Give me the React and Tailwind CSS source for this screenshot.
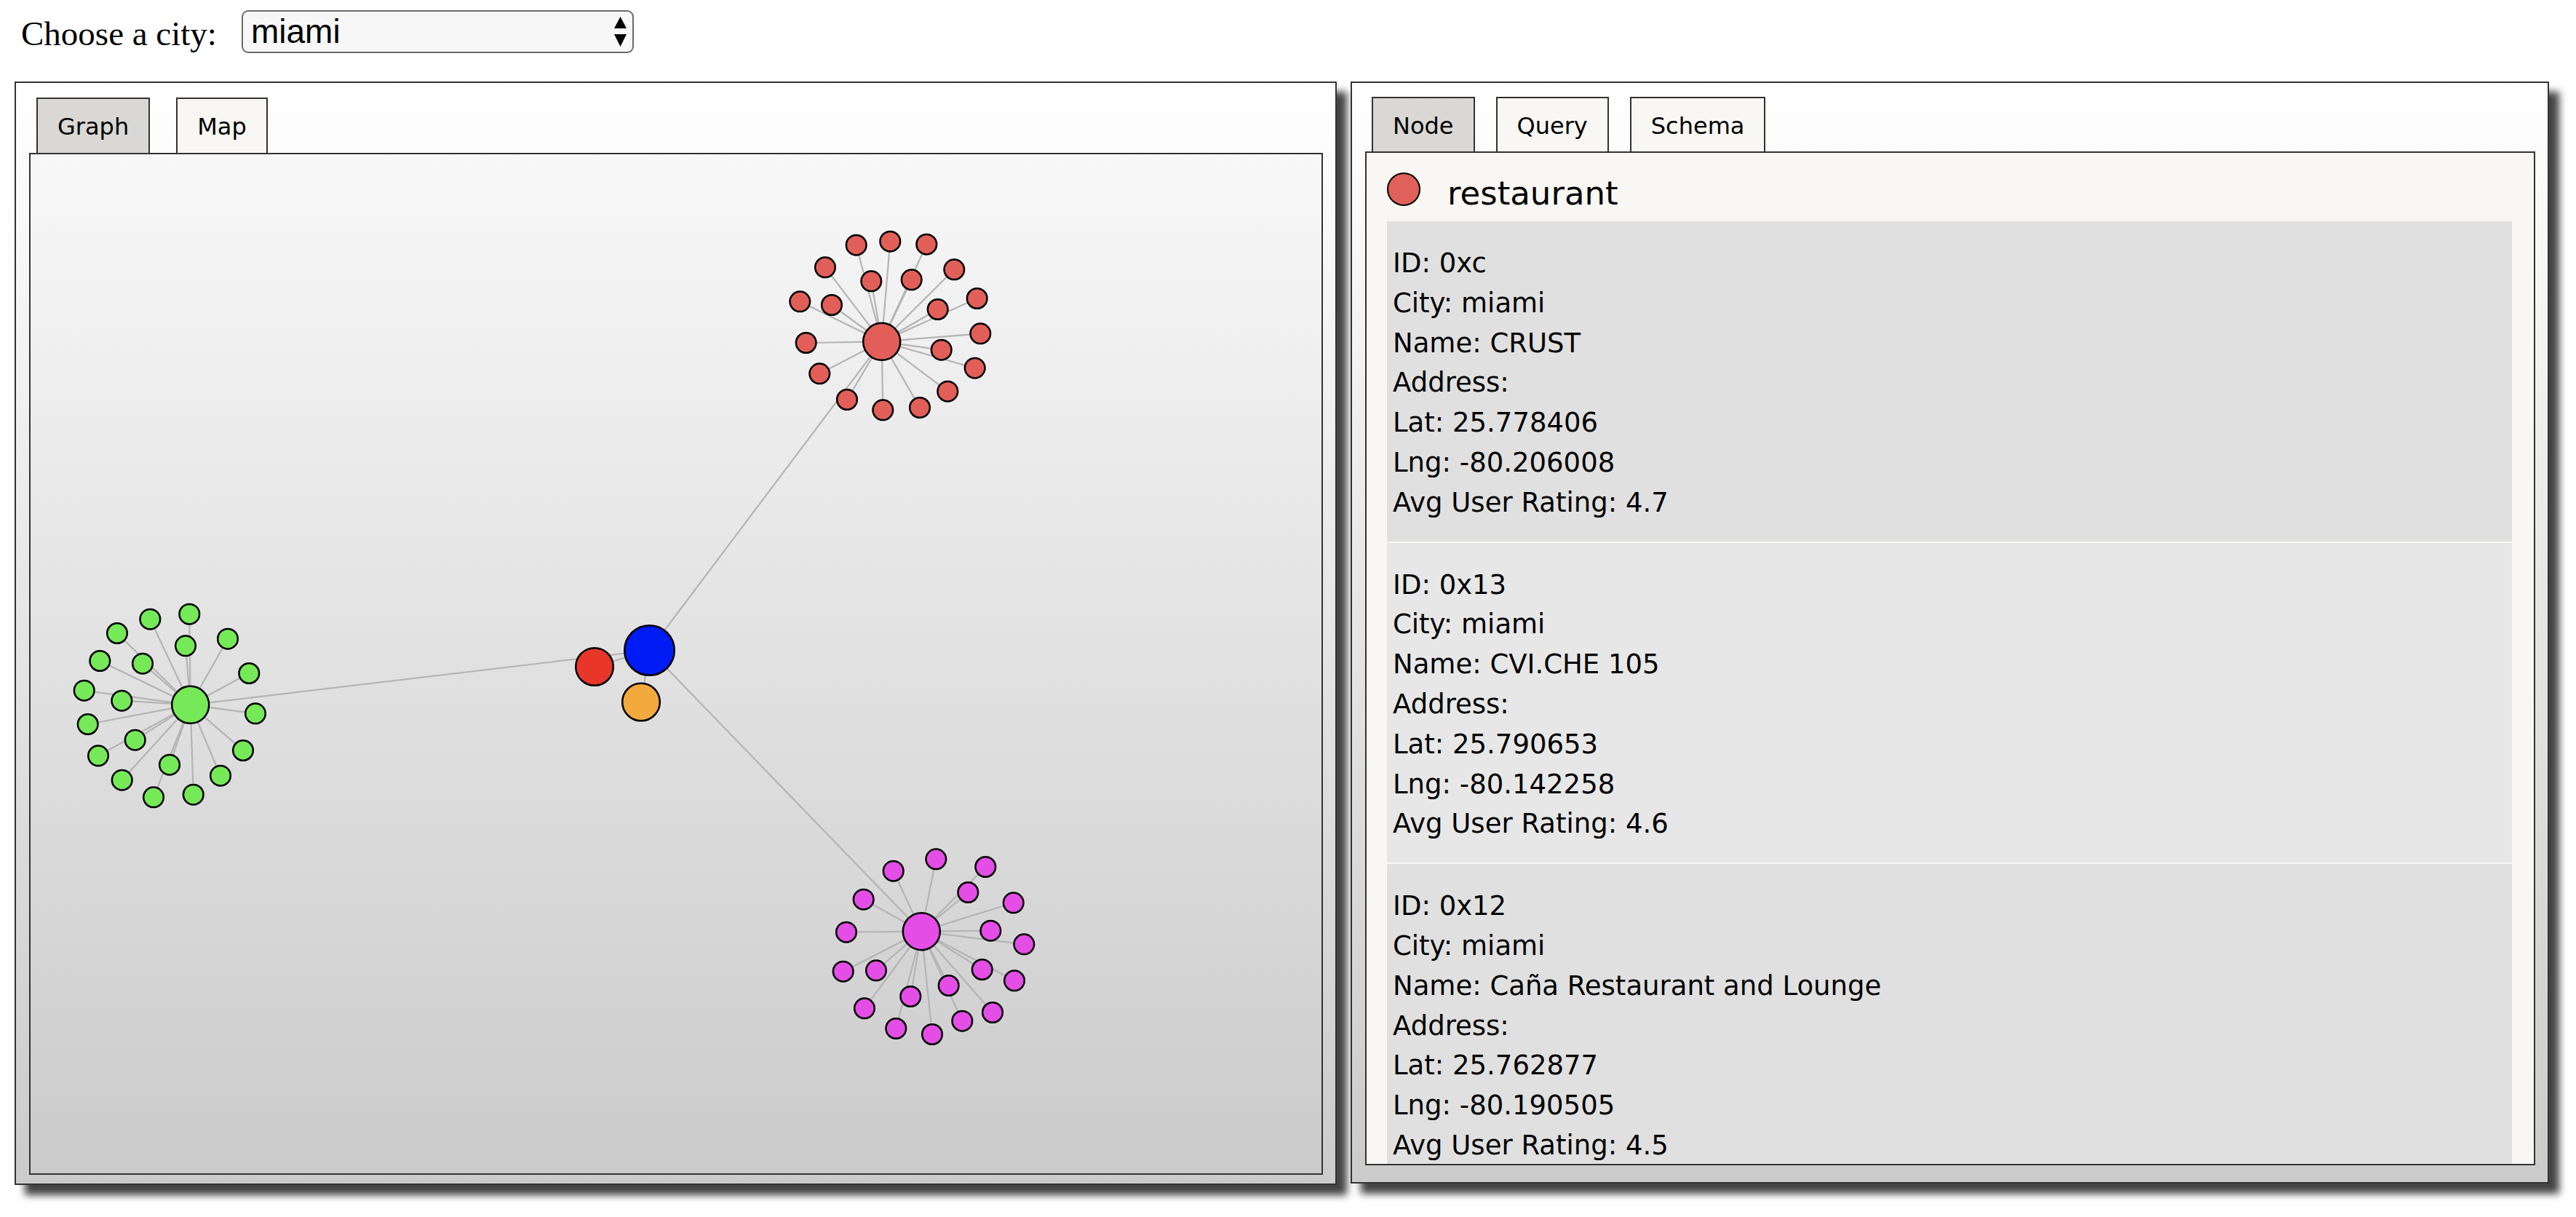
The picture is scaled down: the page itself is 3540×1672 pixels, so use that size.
import React from 'react';

const EDGE = '#b4b4b4';
const BLUE = [892.5, 893.5];

// hub nodes with their leaf nodes, page coordinates
const clusters = [
    {
        color: '#e15f58',
        hub: [1211.7, 469.3],
        leaves: [
            [1176.7, 336.7], [1223.3, 331.7], [1273.3, 335.7], [1134, 367.3], [1197.3, 386.3],
            [1252.7, 384.3], [1311.3, 370.3], [1099.3, 414.3], [1143, 419], [1288.7, 425],
            [1342.7, 410], [1107.7, 471], [1347.3, 458.3], [1293.7, 480.7], [1126.3, 513.3],
            [1339.7, 505.7], [1302.3, 537.7], [1164, 549], [1213.3, 563.3], [1264, 560],
        ],
    },
    {
        color: '#75e957',
        hub: [261.7, 968.3],
        leaves: [
            [260.3, 843.7], [206.3, 850.7], [161, 870], [255, 887.3], [313, 877.7],
            [137.3, 908], [196, 911.7], [342.3, 925], [115.7, 948.7], [167.3, 962.7],
            [351, 980.3], [120.7, 995], [185.7, 1016.7], [135, 1038.3], [334, 1031],
            [233, 1050.7], [303, 1065.7], [167.7, 1071.7], [211, 1095.3], [265.7, 1091.7],
        ],
    },
    {
        color: '#e44de6',
        hub: [1266.3, 1279.7],
        leaves: [
            [1286.3, 1180.3], [1227.7, 1196.7], [1354.3, 1191], [1330.3, 1226], [1186.7, 1235.7],
            [1392.7, 1240.3], [1163, 1280.7], [1361.3, 1278.7], [1407.3, 1297.3], [1158.7, 1334.7],
            [1204, 1333.3], [1349.7, 1332], [1394, 1347.3], [1303.7, 1354], [1251.3, 1369],
            [1188, 1385.3], [1364, 1391], [1322.3, 1402.7], [1231.3, 1413], [1281, 1421],
        ],
    },
];

const smallNodes = [
    {color: '#e8372a', at: [817, 916]},
    {color: '#f2aa3e', at: [881, 964.5]},
];

const restaurants = [
    {id: '0xc', name: 'CRUST', lat: '25.778406', lng: '-80.206008', rating: '4.7'},
    {id: '0x13', name: 'CVI.CHE 105', lat: '25.790653', lng: '-80.142258', rating: '4.6'},
    {id: '0x12', name: 'Caña Restaurant and Lounge', lat: '25.762877', lng: '-80.190505', rating: '4.5'},
];

function Tab({label, active}) {
    return (
        <div
            className={`h-full flex items-center pt-[2px] px-[27px] border-2 border-b-0 border-[#333] text-[32px] text-black ${active ? 'bg-[#d9d8d4]' : 'bg-[#f8f7f3]'}`}>
            {label}
        </div>
    );
}

function Graph() {
    return (
        <svg width="1774" height="1400" viewBox="42 212 1774 1400" className="block">
            {clusters.map((c, i) => (
                <g key={'e' + i}>
                    <line x1={c.hub[0]} y1={c.hub[1]} x2={BLUE[0]} y2={BLUE[1]} stroke={EDGE} strokeWidth="2.2"/>
                    {c.leaves.map((l, j) => (
                        <line key={j} x1={c.hub[0]} y1={c.hub[1]} x2={l[0]} y2={l[1]} stroke={EDGE}
                              strokeWidth="2.2"/>
                    ))}
                </g>
            ))}
            {smallNodes.map((n, i) => (
                <line key={'s' + i} x1={n.at[0]} y1={n.at[1]} x2={BLUE[0]} y2={BLUE[1]} stroke={EDGE}
                      strokeWidth="2.2"/>
            ))}

            {clusters.map((c, i) => (
                <g key={'n' + i}>
                    {c.leaves.map((l, j) => (
                        <circle key={j} cx={l[0]} cy={l[1]} r="13.8" fill={c.color} stroke="#000" strokeWidth="2.5"/>
                    ))}
                    <circle cx={c.hub[0]} cy={c.hub[1]} r="25.5" fill={c.color} stroke="#000" strokeWidth="2.5"/>
                </g>
            ))}
            {smallNodes.map((n, i) => (
                <circle key={'c' + i} cx={n.at[0]} cy={n.at[1]} r="25.8" fill={n.color} stroke="#000"
                        strokeWidth="2.5"/>
            ))}
            <circle cx={BLUE[0]} cy={BLUE[1]} r="34.3" fill="#001cf5" stroke="#000" strokeWidth="2.5"/>
        </svg>
    );
}

export default function App() {
    return (
        <div className="w-[3540px] h-[1672px] bg-white pt-[14px] pl-[20px] overflow-hidden">

            {/* city chooser */}
            <div className="flex items-center h-[59px] pl-[9px]">
                <div className="w-[303px] mt-[6px] text-[47px] text-black font-['Liberation_Serif',serif] whitespace-nowrap">
                    Choose a city:
                </div>
                <div
                    className="w-[539px] h-[59px] flex items-center justify-between pl-[11px] pr-[8px] rounded-[9px] border-2 border-[#6b6b6b] bg-[#f7f7f7]">
                    <span className="text-[46px] text-black font-['Liberation_Sans',Arial,sans-serif]">miami</span>
                    <svg width="17" height="42" viewBox="0 0 17 42">
                        <polygon points="0,16 8.5,0 17,16" fill="#000"/>
                        <polygon points="0,24 17,24 8.5,41" fill="#000"/>
                    </svg>
                </div>
            </div>

            <div className="flex mt-[39px] gap-[19px] font-['DejaVu_Sans',Verdana,sans-serif]">

                {/* left panel: graph */}
                <div
                    className="w-[1817px] h-[1516px] border-2 border-[#333] bg-linear-to-b from-[#ffffff] to-[#cbcbcb] pt-[20px] pl-[18px] pr-[17px] pb-[12px] shadow-[14px_14px_10px_#444] flex flex-col">
                    <div className="h-[76px] flex pl-[10px] gap-[36px]">
                        <Tab label="Graph" active/>
                        <Tab label="Map"/>
                    </div>
                    <div
                        className="w-[1778px] h-[1404px] border-2 border-[#333] bg-linear-to-b from-[#f8f8f8] to-[#cbcbcb] overflow-hidden">
                        <Graph/>
                    </div>
                </div>

                {/* right panel: node details */}
                <div
                    className="w-[1647px] h-[1514px] border-2 border-[#333] bg-linear-to-b from-[#ffffff] to-[#cbcbcb] pt-[19px] pl-[18px] pr-[17px] pb-[23px] shadow-[14px_14px_10px_#444] flex flex-col">
                    <div className="h-[75px] flex pl-[9px] gap-[29px]">
                        <Tab label="Node" active/>
                        <Tab label="Query"/>
                        <Tab label="Schema"/>
                    </div>
                    <div
                        className="w-[1608px] h-[1393px] border-2 border-[#333] bg-[#f8f7f3] overflow-hidden pl-[28px] pr-[30px]">
                        <div className="h-[94px] pt-[27px] flex items-start">
                            <div className="w-[46px] h-[46px] rounded-full bg-[#e0605a] border-2 border-black"/>
                            <div className="ml-[37px] mt-[3px] text-[45px] leading-[52px] text-black">restaurant</div>
                        </div>
                        <div className="flex flex-col gap-[2px]">
                            {restaurants.map((r, i) => (
                                <div key={r.id}
                                     className={`pt-[31px] pb-[25px] pl-[8px] text-[37px] leading-[54.8px] text-black ${i % 2 === 1 ? 'bg-[#e7e7e7]' : 'bg-[#e0e0e0]'}`}>
                                    <div>ID: {r.id}</div>
                                    <div>City: miami</div>
                                    <div>Name: {r.name}</div>
                                    <div>Address:</div>
                                    <div>Lat: {r.lat}</div>
                                    <div>Lng: {r.lng}</div>
                                    <div>Avg User Rating: {r.rating}</div>
                                </div>
                            ))}
                        </div>
                    </div>
                </div>
            </div>
        </div>
    );
}
